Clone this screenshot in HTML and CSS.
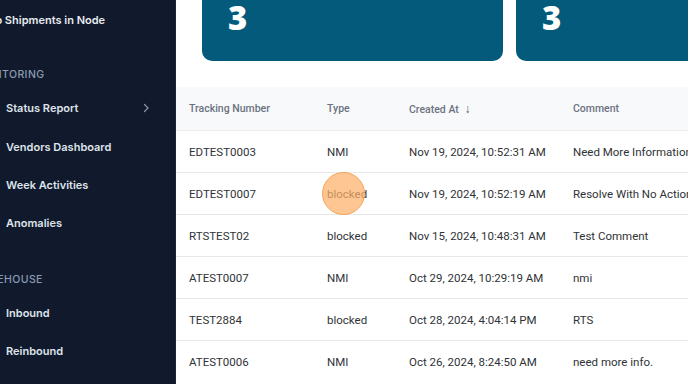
FILE: index.html
```html
<!DOCTYPE html>
<html lang="en">
<head>
    <meta charset="UTF-8">
    <meta name="viewport" content="width=device-width, initial-scale=1.0">
    <title>Shipments Monitoring</title>
    <link rel="stylesheet" href="styles.css">
</head>
<body>
    <div class="layout">
        <aside class="sidebar">
            <div class="sidebar-inner">
                <div class="nav-title">To Shipments in Node</div>

                <div class="nav-label">Monitoring</div>
                <a class="nav-item">
                    <span>Status Report</span>
                    <svg class="chevron" width="10" height="10" viewBox="0 0 10 10"><path d="M3.5 1.5 L7 5 L3.5 8.5" fill="none" stroke="#8b95a7" stroke-width="1.2" stroke-linecap="round" stroke-linejoin="round"/></svg>
                </a>
                <a class="nav-item">Vendors Dashboard</a>
                <a class="nav-item">Week Activities</a>
                <a class="nav-item">Anomalies</a>

                <div class="nav-label second">Warehouse</div>
                <a class="nav-item">Inbound</a>
                <a class="nav-item">Reinbound</a>
            </div>
        </aside>

        <main class="main">
            <div class="cards">
                <div class="card"><span class="card-value">3</span></div>
                <div class="card"><span class="card-value">3</span></div>
                <div class="card"><span class="card-value">3</span></div>
            </div>

            <table class="table">
                <thead>
                    <tr>
                        <th class="col-track">Tracking Number</th>
                        <th class="col-type">Type</th>
                        <th class="col-date">Created At <span class="sort">&#8595;</span></th>
                        <th class="col-comment">Comment</th>
                    </tr>
                </thead>
                <tbody>
                    <tr><td>EDTEST0003</td><td>NMI</td><td>Nov 19, 2024, 10:52:31 AM</td><td>Need More Information</td></tr>
                    <tr><td>EDTEST0007</td><td class="clicked">blocked<span class="click-dot"></span></td><td>Nov 19, 2024, 10:52:19 AM</td><td>Resolve With No Action</td></tr>
                    <tr><td>RTSTEST02</td><td>blocked</td><td>Nov 15, 2024, 10:48:31 AM</td><td>Test Comment</td></tr>
                    <tr><td>ATEST0007</td><td>NMI</td><td>Oct 29, 2024, 10:29:19 AM</td><td>nmi</td></tr>
                    <tr><td>TEST2884</td><td>blocked</td><td>Oct 28, 2024, 4:04:14 PM</td><td>RTS</td></tr>
                    <tr><td>ATEST0006</td><td>NMI</td><td>Oct 26, 2024, 8:24:50 AM</td><td>need more info.</td></tr>
                </tbody>
            </table>
        </main>
    </div>
</body>
</html>
```

FILE: styles.css
```css
body {
    margin: 0;
    background-color: #ffffff;
    font-family: 'Roboto', 'Liberation Sans', sans-serif;
    overflow: hidden;
}

.layout {
    display: flex;
    height: 384px;
    width: 688px;
    overflow: hidden;
}

.sidebar {
    width: 175px;
    flex-shrink: 0;
    background-color: #111a2d;
    border-right: 1px solid #1d2638;
    overflow: hidden;
}

.sidebar-inner {
    margin-left: -28px;
    font-family: 'Inter', 'Liberation Sans', sans-serif;
}

.nav-title {
    padding: 13px 0 0 17px;
    height: 40px;
    font-size: 11px;
    font-weight: 600;
    color: #e8ebf0;
    box-sizing: border-box;
}

.nav-label {
    margin-top: 28px;
    height: 14px;
    font-size: 10.5px;
    font-weight: 500;
    letter-spacing: 0.4px;
    text-transform: uppercase;
    color: #8a9bb2;
}

.nav-label.second {
    margin-top: 30px;
}

.nav-item {
    display: flex;
    align-items: center;
    justify-content: space-between;
    height: 38.4px;
    padding: 0 24px 0 34px;
    font-size: 11px;
    font-weight: 600;
    color: #dfe3ea;
    box-sizing: border-box;
}

.nav-label + .nav-item {
    margin-top: 7px;
}

.chevron {
    display: block;
}

.main {
    flex: 1;
    min-width: 0;
    overflow: hidden;
}

.cards {
    display: flex;
    gap: 13px;
    margin: -40px 0 0 26px;
}

.card {
    flex-shrink: 0;
    width: 301px;
    height: 101px;
    background-color: #045a7b;
    border-radius: 10px;
    padding: 43px 0 0 26px;
    box-sizing: border-box;
}

.card-value {
    display: block;
    font-family: 'Open Sans', 'Liberation Sans', sans-serif;
    font-size: 33px;
    font-weight: 800;
    line-height: 30px;
    color: #ffffff;
}

.table {
    margin-top: 26px;
    border-collapse: collapse;
    table-layout: fixed;
    width: 640px;
}

.table th {
    height: 43px;
    padding: 0 13px;
    background-color: #f8f9fa;
    text-align: left;
    font-size: 10.5px;
    font-weight: 500;
    color: #6b7280;
    white-space: nowrap;
}

.sort {
    margin-left: 3px;
    font-size: 12px;
    color: #4b5563;
}

.col-track { width: 112px; }
.col-type { width: 56px; }
.col-date { width: 138px; }
.col-comment { width: 230px; }

.table td {
    height: 41px;
    padding: 0 13px;
    border-top: 1px solid #e6e8eb;
    font-size: 11.5px;
    color: #2f3337;
    white-space: nowrap;
    overflow: hidden;
}

.table tr:first-child td {
    border-top: 1px solid #eceef0;
}

.clicked {
    position: relative;
    overflow: visible !important;
}

.click-dot {
    position: absolute;
    left: 8px;
    top: 50%;
    width: 41px;
    height: 41px;
    margin-top: -22px;
    border-radius: 50%;
    background-color: rgba(252, 176, 104, 0.72);
    border: 1px solid #f4a35a;
}
```
